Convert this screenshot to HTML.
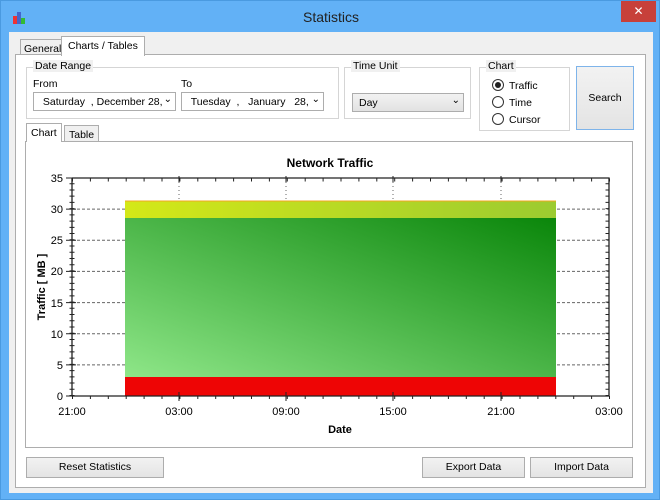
<!DOCTYPE html>
<html><head><meta charset="utf-8"><style>
*{box-sizing:border-box}
body{margin:0;width:660px;height:500px;overflow:hidden;font-family:"Liberation Sans",sans-serif;font-size:10.5px;color:#000;background:#fff}
.win{position:absolute;left:0;top:0;width:660px;height:500px;background:#62b1f6;border:1px solid #4a9ae0}
.title{position:absolute;left:0;top:8px;width:660px;text-align:center;font-size:14px;color:#222}
.close{position:absolute;left:620px;top:0;width:35px;height:21px;background:#c7403a;color:#fff;text-align:center;font-size:12px;line-height:20px}
.client{position:absolute;left:8px;top:31px;width:644px;height:461px;background:#f0f0f0}
.abs{position:absolute}
.tab{position:absolute;border:1px solid #adadad;border-bottom:none;background:#f0f0f0;padding:3px 4px;font-size:10.5px}
.page{position:absolute;border:1px solid #adadad;background:#f0f0f0}
.grp{position:absolute;border:1px solid #d5d5d5}
.grp>span{position:absolute;top:-8px;left:6px;background:#f0f0f0;padding:0 2px;font-size:10.5px}
.dd{position:absolute;height:19px;border:1px solid #adadad;background:#fff;font-size:10.5px;padding:3px 0 0 6px;white-space:pre;overflow:hidden}
.dd b{position:absolute;right:3px;top:1px;font-weight:normal;font-size:10px;background:inherit;padding-left:2px}
.btn{position:absolute;height:21px;border:1px solid #adadad;background:linear-gradient(#f2f2f2,#e4e4e4);text-align:center;font-size:10.5px;line-height:19px}
.radio{position:absolute;width:12px;height:12px;border:1px solid #333;border-radius:50%;background:#fff}
</style></head><body>
<div class="win">
<svg class="abs" style="left:11px;top:10px" width="16" height="14"><rect x="1" y="5" width="4" height="8" fill="#e33"/><rect x="5" y="1" width="4" height="12" fill="#46c"/><rect x="9" y="7" width="4" height="6" fill="#3b3"/></svg>
<div class="title">Statistics</div>
<div class="close">✕</div>
<div class="client">
<div class="tab" style="left:11px;top:7px;height:16px;padding:3px 3px">General</div>
<div class="tab" style="left:52px;top:4px;height:20px;background:#fff;z-index:2;padding:3px 6px">Charts / Tables</div>
<div class="page" style="left:6px;top:22px;width:631px;height:434px;background:#fff"></div>
<div class="grp" style="left:17px;top:35px;width:313px;height:52px"><span>Date Range</span></div>
<div class="abs" style="left:24px;top:46px">From</div>
<div class="abs" style="left:172px;top:46px">To</div>
<div class="dd" style="left:24px;top:60px;width:143px"> Saturday  , December 28, 2<b>⌄</b></div>
<div class="dd" style="left:172px;top:60px;width:143px"> Tuesday  ,   January   28, 2<b>⌄</b></div>
<div class="grp" style="left:335px;top:35px;width:127px;height:52px"><span>Time Unit</span></div>
<div class="dd" style="left:343px;top:61px;width:112px;background:linear-gradient(#f2f2f2,#e2e2e2)">Day<b style="background:none">⌄</b></div>
<div class="grp" style="left:470px;top:35px;width:91px;height:64px"><span>Chart</span></div>
<div class="radio" style="left:483px;top:47px"><div style="position:absolute;left:2px;top:2px;width:6px;height:6px;border-radius:50%;background:#222"></div></div>
<div class="abs" style="left:500px;top:48px">Traffic</div>
<div class="radio" style="left:483px;top:64px"></div>
<div class="abs" style="left:500px;top:65px">Time</div>
<div class="radio" style="left:483px;top:81px"></div>
<div class="abs" style="left:500px;top:82px">Cursor</div>
<div class="btn" style="left:567px;top:34px;width:58px;height:64px;line-height:62px;border-color:#7eb4ea">Search</div>
<div class="tab" style="left:17px;top:91px;height:19px;background:#fff;z-index:2">Chart</div>
<div class="tab" style="left:55px;top:93px;height:16px">Table</div>
<div class="page" style="left:16px;top:109px;width:608px;height:307px;background:#fff"></div>
<div class="btn" style="left:17px;top:425px;width:138px">Reset Statistics</div>
<div class="btn" style="left:413px;top:425px;width:103px">Export Data</div>
<div class="btn" style="left:521px;top:425px;width:103px">Import Data</div>
</div>
<svg class="abs" style="left:0;top:0" width="660" height="500">
<defs>
<linearGradient id="g" x1="0" y1="1" x2="1" y2="0"><stop offset="0" stop-color="#8ee688"/><stop offset="1" stop-color="#0a860a"/></linearGradient>
<linearGradient id="y" x1="0" y1="0" x2="1" y2="0"><stop offset="0" stop-color="#d4e818"/><stop offset="1" stop-color="#9ccb30"/></linearGradient>
</defs>
<text x="329" y="166" text-anchor="middle" font-family="Liberation Sans" font-weight="bold" font-size="12">Network Traffic</text>
<g stroke="#666" stroke-dasharray="3 2" stroke-width="1">
<path d="M71 363.9H608M71 332.7H608M71 301.6H608M71 270.4H608M71 239.3H608M71 208.1H608"/>
<path d="M178 177V200M285 177V200M392 177V200M500 177V200" stroke-dasharray="1 3"/>
</g>
<rect x="124" y="200" width="431" height="17" fill="url(#y)"/>
<rect x="124" y="217" width="431" height="159" fill="url(#g)"/>
<rect x="124" y="376" width="431" height="19" fill="#ee0505"/>
<line x1="124" y1="200" x2="555" y2="200" stroke="#f0a820"/>
<g stroke="#222" fill="none">
<path d="M71 177V395H608V177H71" stroke-width="1.3"/>
<line x1="71" y1="395" x2="71" y2="177" stroke-width="5" stroke-dasharray="1 5.229"/>
<line x1="606" y1="395" x2="606" y2="177" stroke-width="3" stroke-dasharray="1 5.229"/>
<path d="M65 395H75M65 363.9H75M65 332.7H75M65 301.6H75M65 270.4H75M65 239.3H75M65 208.1H75M65 177H75"/>
<line x1="71" y1="396.5" x2="610" y2="396.5" stroke-width="3" stroke-dasharray="1 16.9"/>
<line x1="71" y1="179" x2="610" y2="179" stroke-width="3" stroke-dasharray="1 16.9"/>
<path d="M178 391V400M285 391V400M392 391V400M500 391V400M178 175V181M285 175V181M392 175V181M500 175V181"/>
</g>
<g font-family="Liberation Sans" font-size="11" text-anchor="end">
<text x="62" y="399">0</text><text x="62" y="368">5</text><text x="62" y="337">10</text><text x="62" y="306">15</text><text x="62" y="274">20</text><text x="62" y="243">25</text><text x="62" y="212">30</text><text x="62" y="181">35</text>
</g>
<g font-family="Liberation Sans" font-size="11" text-anchor="middle">
<text x="71" y="414">21:00</text><text x="178" y="414">03:00</text><text x="285" y="414">09:00</text><text x="392" y="414">15:00</text><text x="500" y="414">21:00</text><text x="608" y="414">03:00</text>
<text x="339" y="432" font-weight="bold">Date</text>
<text transform="translate(44 286) rotate(-90)" font-weight="bold">Traffic [ MB ]</text>
</g>
</svg>
</div>
</body></html>
